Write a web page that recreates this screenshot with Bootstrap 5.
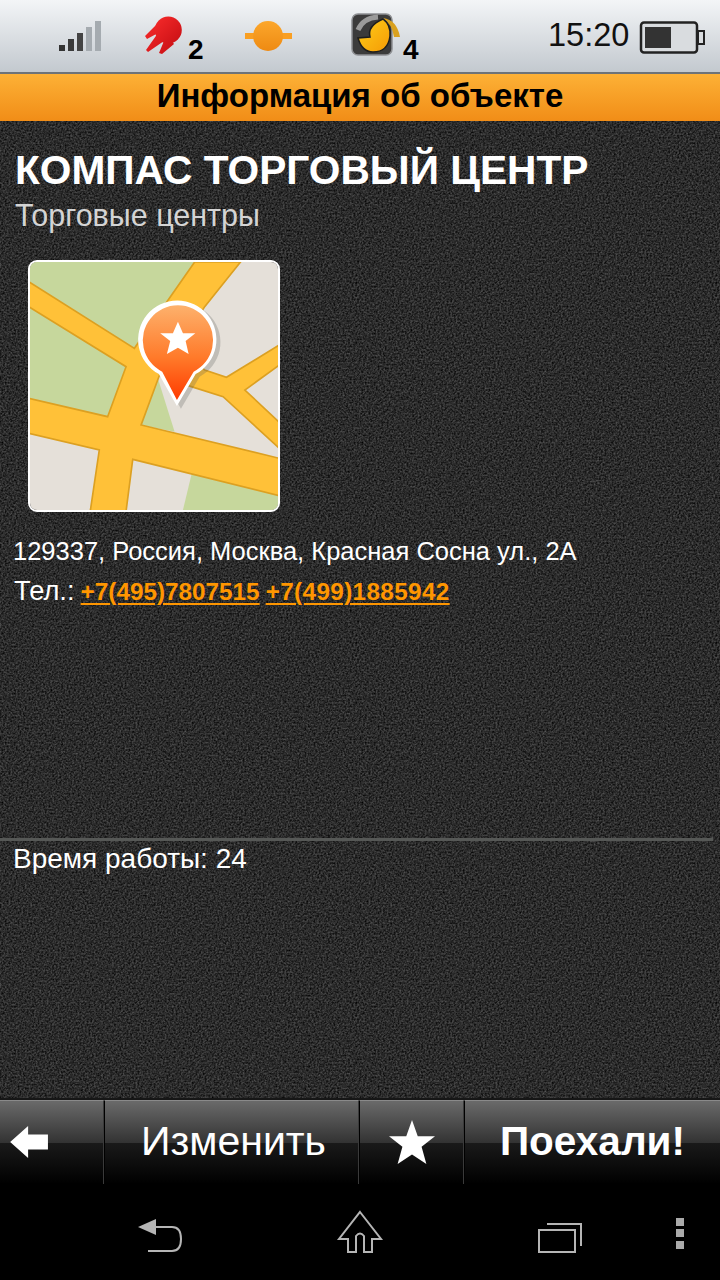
<!DOCTYPE html>
<html lang="ru">
<head>
    <meta charset="UTF-8">
    <meta name="viewport" content="width=device-width, initial-scale=1.0">
    <title>Информация об объекте</title>
    <link href="https://cdn.jsdelivr.net/npm/bootstrap@5.3.3/dist/css/bootstrap.min.css" rel="stylesheet">
    <style>
        html, body { height: 100%; }
        body {
            width: 720px;
            height: 1280px;
            overflow: hidden;
            background: #000;
            font-family: "Liberation Sans", Arial, sans-serif;
        }
        .phone { height: 1280px; }
        .status-bar {
            height: 72px;
            flex: none;
            padding-left: 58px;
            background: linear-gradient(#f3f5f7, #c3c9cf);
            color: #000;
        }
        .status-bar svg { flex: none; }
        .ic-rocket { margin-left: 36px; }
        .ic-planet { margin-left: 40px; }
        .ic-compass { margin-left: 56px; }
        .status-count { width: 16px; padding-top: 36px; font-size: 28px; font-weight: 700; line-height: 1; }
        .count-a { margin-left: 2px; }
        .count-b { margin-left: -1px; }
        .status-time { width: 91px; margin-left: 129px; padding-top: 15px; font-size: 32.5px; line-height: 40px; color: #111; }
        .title-bar {
            height: 49px;
            flex: none;
            border-top: 2px solid #6d7378;
            background: linear-gradient(#fdb136, #f18d17);
            color: #000;
            font-size: 33px;
            font-weight: 700;
            line-height: 44px;
            text-align: center;
        }
        .content-area {
            flex: 1 1 auto;
            min-height: 0;
            color: #fff;
            background-color: #2e2e2e;
            background-image: url("data:image/svg+xml,%3Csvg xmlns='http://www.w3.org/2000/svg' width='360' height='360'%3E%3Cfilter id='n' color-interpolation-filters='sRGB'%3E%3CfeTurbulence type='fractalNoise' baseFrequency='0.55' numOctaves='2' stitchTiles='stitch'/%3E%3CfeColorMatrix values='0.42 0 0 0 -0.04 0.42 0 0 0 -0.04 0.42 0 0 0 -0.04 0 0 0 0 1'/%3E%3C/filter%3E%3Crect width='360' height='360' filter='url(%23n)'/%3E%3C/svg%3E");
        }
        .place-name { font-size: 40.7px; font-weight: 700; line-height: 48px; margin: 25px 0 0 15px; }
        .place-type { font-size: 30.5px; line-height: 36px; margin: 3px 0 0 15px; color: #d4d4d4; }
        .map-thumb {
            display: block;
            width: 252px;
            height: 252px;
            margin: 27px 0 0 28px;
            border-radius: 9px;
            border: 2px solid #fff;
        }
        .place-line { font-size: 25.5px; line-height: 36px; margin: 21px 0 0 13px; white-space: nowrap; }
        .place-line.tel-line { margin: 4px 0 0 14px; font-size: 27.3px; word-spacing: -1.5px; }
        .place-line.hours-line { margin-top: 0; font-size: 28px; }
        .place-line a { color: #ff9600; font-weight: 700; font-size: 24.3px; text-decoration-thickness: 2px; text-underline-offset: 3px; }
        .place-line a.tel-b { letter-spacing: .35px; }
        .divider-line { width: 713px; height: 3px; margin-top: 228px; background: #565856; }
        .tool-bar { height: 86px; flex: none; background: #000; border-top: 2px solid #161616; }
        .tool-btn {
            height: 84px;
            padding-bottom: 2px;
            color: #fff;
            font-size: 41px;
            border-right: 1px solid #3a3a3a;
            border-top: 1px solid #8a8a8a;
            background: linear-gradient(#6a6a6a 0, #333 50%, #1a1a1a 50%, #000 100%);
        }
        .tool-btn + .tool-btn { border-left: 1px solid #000; }
        .btn-back { width: 104px; }
        .btn-edit { width: 255px; padding-left: 4px; }
        .btn-star { width: 105px; }
        .btn-go { width: 256px; font-size: 40.5px; font-weight: 700; border-right: 0; }
        .nav-bar { height: 96px; flex: none; background: #000; padding-left: 136px; }
        .nav-bar svg { flex: none; }
        .nav-back { margin-top: 34px; }
        .nav-home { margin: 26px 0 0 152px; }
        .nav-apps { margin: 36px 0 0 152px; }
        .nav-more { margin: 32px 0 0 90px; }
    </style>
</head>
<body>
<div class="phone d-flex flex-column">
    <!-- status bar -->
    <div class="status-bar d-flex align-items-start">
        <svg width="46" height="56" viewBox="0 0 46 56">
            <rect x="1" y="45" width="6" height="6" fill="#333"/>
            <rect x="10" y="39" width="6" height="12" fill="#3a3a3a"/>
            <rect x="19" y="33" width="6" height="18" fill="#444"/>
            <rect x="28" y="27" width="6" height="24" fill="#a5abb0"/>
            <rect x="37" y="21" width="6" height="30" fill="#a5abb0"/>
        </svg>
        <svg class="ic-rocket" width="46" height="60" viewBox="0 0 46 60">
            <defs><linearGradient id="red" x1="0" y1="0" x2="1" y2="1"><stop offset="0" stop-color="#f62a2a"/><stop offset="1" stop-color="#c80f14"/></linearGradient></defs>
            <path d="M18 23 L5 36 L7 39 L18 33 L6 50 L8 52 L24 41 L19 53 L22 54 L34 44 Z" fill="url(#red)"/>
            <circle cx="28.300" cy="30" r="13.500" fill="url(#red)"/>
        </svg>
        <span class="status-count count-a">2</span>
        <svg class="ic-planet" width="50" height="60" viewBox="0 0 50 60">
            <defs><linearGradient id="amber" x1="0" y1="0" x2="0" y2="1"><stop offset="0" stop-color="#fca72c"/><stop offset="1" stop-color="#ee8a12"/></linearGradient></defs>
            <rect x="1" y="33" width="47" height="6" fill="#f99f22"/>
            <circle cx="24" cy="36" r="15" fill="url(#amber)"/>
        </svg>
        <svg class="ic-compass" width="54" height="60" viewBox="0 0 54 60">
            <defs><linearGradient id="gold" x1="0" y1="0" x2="1" y2="1"><stop offset="0" stop-color="#ffcf1a"/><stop offset="1" stop-color="#f59a05"/></linearGradient></defs>
            <rect x="2" y="14" width="40" height="41" rx="6" fill="#3b3b3b" stroke="#8d8f92" stroke-width="1.500"/>
            <path d="M8 30 Q13 18 28 17" fill="none" stroke="#9a9a9a" stroke-width="5"/>
            <path d="M33 18 Q47 20 50 37 L44 37 Q42 24 33 18 Z" fill="#d9a11f"/>
            <path d="M33 19 Q41 25 40 36 Q38 52 23 52 Q12 52 8 38 L20 37 Q17 26 33 19 Z" fill="url(#gold)" stroke="#1e1e1e" stroke-width="1.500"/>
        </svg>
        <span class="status-count count-b">4</span>
        <span class="status-time">15:20</span>
        <svg width="68" height="60" viewBox="0 0 68 60">
            <rect x="2" y="22.500" width="56" height="30" rx="3" fill="#d9dcdf" stroke="#222" stroke-width="2.500"/>
            <rect x="6" y="27" width="26" height="21" fill="#333"/>
            <rect x="59" y="31" width="6" height="13" fill="#d9dcdf" stroke="#222" stroke-width="2"/>
        </svg>
    </div>
    <div class="title-bar">Информация об объекте</div>

    <!-- object info -->
    <div class="content-area d-flex flex-column">
        <div class="place-name">КОМПАС ТОРГОВЫЙ ЦЕНТР</div>
        <div class="place-type">Торговые центры</div>
        <svg class="map-thumb" viewBox="33 36 741 744" preserveAspectRatio="none">
            <defs>
                <linearGradient id="pin" x1="0" y1="0" x2="0" y2="1"><stop offset="0" stop-color="#fdb16c"/><stop offset="0.55" stop-color="#ff7a2a"/><stop offset="1" stop-color="#ff3a00"/></linearGradient>
            </defs>
            <rect x="33" y="36" width="741" height="744" fill="#e5e0d9"/>
            <path d="M33 36 H560 L330 400 L270 520 H33 Z" fill="#c6d79c"/>
            <path d="M415 385 L465 545 L365 525 Z" fill="#c6d79c"/>
            <path d="M520 655 L490 780 H774 V735 Z" fill="#c6d79c"/>
            <path d="M525 36 H662 L555 170 L480 290 L555 360 L620 382 L778 285 V345 L675 420 L778 517 V595 L610 440 L515 410 L470 395 L420 375 L365 525 L778 625 V737 L340 628 L320 784 H213 L240 600 L29 550 V445 L265 500 L320 350 L29 170 V95 L345 295 Z" fill="#ffc138" stroke="#dca022" stroke-width="5"/>
            <path d="M484 476 L430 380 A117 117 0 1 1 540 380 Z" fill="#555" opacity="0.25"/>
            <path d="M472 468 L418 372 A117 117 0 1 1 528 372 Z" fill="#fff"/>
            <path d="M472 450 L428 365 A105 105 0 1 1 522 365 Z" fill="url(#pin)"/>
            <path d="M475 215 L490 250 L527 250 L498 273 L507 312 L475 293 L442 312 L452 273 L422 250 L460 250 Z" fill="#fff"/>
        </svg>
        <div class="place-line">129337, Россия, Москва, Красная Сосна ул., 2А</div>
        <div class="place-line tel-line">Тел.: <a href="#">+7(495)7807515</a> <a href="#" class="tel-b">+7(499)1885942</a></div>
        <div class="divider-line"></div>
        <div class="place-line hours-line">Время работы: 24</div>
    </div>

    <!-- bottom buttons -->
    <div class="tool-bar d-flex">
        <div class="tool-btn btn-back d-flex align-items-center">
            <svg width="44" height="34" viewBox="0 0 44 36" class="ms-2"><path d="M1 18 L20 1 V10 H41 V26 H20 V35 Z" fill="#fff"/></svg>
        </div>
        <div class="tool-btn btn-edit d-flex align-items-center justify-content-center">Изменить</div>
        <div class="tool-btn btn-star d-flex align-items-center justify-content-center">
            <svg width="48" height="46" viewBox="0 0 50 48"><path d="M25 1 L31 18 L49 18 L35 29 L40 47 L25 37 L10 47 L15 29 L1 18 L19 18 Z" fill="#fff"/></svg>
        </div>
        <div class="tool-btn btn-go d-flex align-items-center justify-content-center">Поехали!</div>
    </div>

    <!-- android nav -->
    <div class="nav-bar d-flex align-items-start">
        <svg class="nav-back" width="48" height="36" viewBox="0 0 48 36">
            <path d="M2 9 L20 1 V17 Z" fill="#b5b5b5"/>
            <path d="M18 9 H36 Q45 9 45 21 Q45 33 36 33 H12" fill="none" stroke="#b5b5b5" stroke-width="2"/>
        </svg>
        <svg class="nav-home" width="48" height="44" viewBox="0 0 48 44">
            <path d="M24 2 L45 29 H36 V42 H28 V26 Q24 21 20 26 V42 H12 V29 H3 Z" fill="none" stroke="#b5b5b5" stroke-width="2"/>
        </svg>
        <svg class="nav-apps" width="48" height="34" viewBox="0 0 48 34">
            <rect x="3" y="10" width="36" height="22" fill="none" stroke="#b5b5b5" stroke-width="2"/>
            <path d="M11 4 H45 V26" fill="none" stroke="#b5b5b5" stroke-width="2"/>
        </svg>
        <svg class="nav-more" width="14" height="34" viewBox="0 0 14 34">
            <rect x="2" y="2" width="8" height="8" fill="#aaa"/>
            <rect x="2" y="13" width="8" height="8" fill="#aaa"/>
            <rect x="2" y="25" width="8" height="8" fill="#aaa"/>
        </svg>
    </div>
</div>
<script src="https://cdn.jsdelivr.net/npm/bootstrap@5.3.3/dist/js/bootstrap.bundle.min.js"></script>
</body>
</html>
